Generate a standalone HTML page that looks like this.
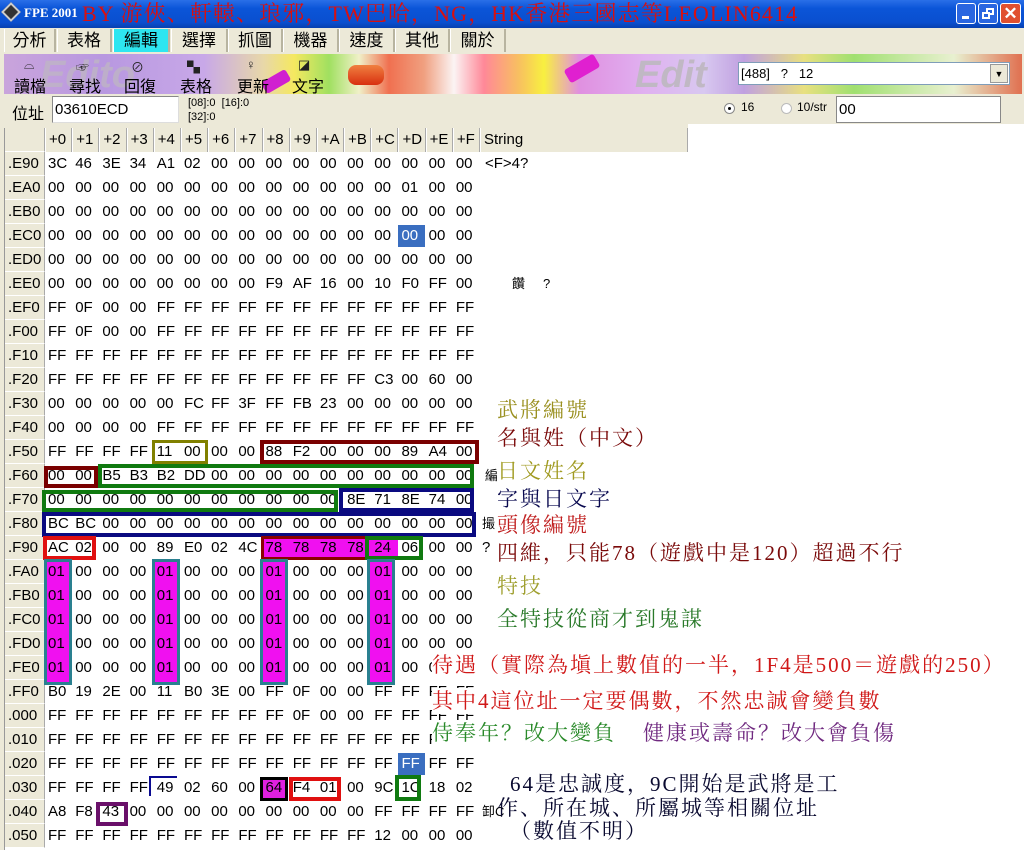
<!DOCTYPE html>
<html><head><meta charset="utf-8">
<style>
*{margin:0;padding:0;box-sizing:border-box}
body{width:1024px;height:850px;overflow:hidden;background:#ece9d8;font-family:"Liberation Sans","Noto Sans CJK TC",sans-serif;position:relative}
.abs{position:absolute}
#title{left:0;top:0;width:1024px;height:28px;background:linear-gradient(#2a6fe8,#0b55d8 30%,#0a4fcf 80%,#0840b0)}
.tab{position:absolute;top:29px;height:23px;font-size:17px;line-height:23px;text-align:center;border-right:2px solid #b8b4a0;border-left:1px solid #fff;color:#000}
#tb{left:4px;top:54px;width:1018px;height:40px;background:linear-gradient(90deg,#c9a4dc 0px,#b898e0 100px,#c8a8e8 200px,#e8d8a8 260px,#f5e860 290px,#a0e060 325px,#f0f0c8 355px,#f07050 385px,#f0a080 420px,#fbf4f4 450px,#ff8898 480px,#f8c060 515px,#f8f040 540px,#e090e0 575px,#e0b0f0 640px,#d8c8f0 700px,#c0a0e0 740px,#e8e080 800px,#a0e070 850px,#e8f0d0 950px,#e07050 1018px)}
.btn{position:absolute;top:73px;font-size:16px;color:#000}
.ico{position:absolute;top:57px;font-size:13px;color:#222}
#grid{left:5px;top:128px;width:683px;height:722px;background:#fff}
.row{position:absolute;left:5px;height:24px;display:flex;font-size:15px;line-height:24px;z-index:2}
.row b{font-weight:normal;width:40px;background:#ece9d8;border-right:1px solid #aaa;border-bottom:1px solid #fff;padding-left:3px}
.row i{font-style:normal;width:27.2px;padding-left:3px;white-space:nowrap}
.row s{text-decoration:none;padding-left:5px;white-space:nowrap}
.hd i{background:#ece9d8;border-right:1px solid #aaa;border-left:1px solid #fff}
.bx{position:absolute;z-index:3}
.fill{position:absolute;z-index:1}
.an{position:absolute;font-family:"Liberation Serif","Noto Serif CJK SC",serif;font-size:21px;line-height:26px;white-space:nowrap;z-index:4;letter-spacing:2px}
</style></head><body>
<div id="title" class="abs"></div>
<div class="abs" style="left:4px;top:5px;width:14px;height:14px;background:#333;transform:rotate(45deg);border:2px solid #ccc"></div>
<div class="abs" style="left:24px;top:5px;color:#fff;font-weight:bold;font-size:13px;font-family:'Liberation Serif',serif">FPE 2001</div>
<div class="abs" style="left:82px;top:0px;color:#d81010;font-size:22px;line-height:28px;letter-spacing:1.1px;font-family:'Liberation Serif','Noto Serif CJK SC',serif;white-space:nowrap">BY 游俠、軒轅、琅邪，TW巴哈，NG，HK香港三國志等LEOLIN6414</div>
<div class="abs" style="left:956px;top:3px;width:20px;height:21px;border:1px solid #fff;border-radius:3px;background:#2a66e0"><div class="abs" style="left:5px;top:12px;width:7px;height:3px;background:#fff"></div></div>
<div class="abs" style="left:978px;top:3px;width:20px;height:21px;border:1px solid #fff;border-radius:3px;background:#2a66e0"><div class="abs" style="left:7px;top:4px;width:8px;height:7px;border:2px solid #fff"></div><div class="abs" style="left:3px;top:8px;width:8px;height:7px;border:2px solid #fff;background:#2a66e0"></div></div>
<div class="abs" style="left:1000px;top:3px;width:21px;height:21px;border:1px solid #fff;border-radius:3px;background:#e05030;color:#fff;font-weight:bold;font-size:17px;text-align:center;line-height:19px">✕</div>

<div class="tab" style="left:4px;width:52px">分析</div>
<div class="tab" style="left:57px;width:55px">表格</div>
<div class="tab" style="left:113px;width:57px;background:#2ee6f0">編輯</div>
<div class="tab" style="left:171px;width:57px">選擇</div>
<div class="tab" style="left:228px;width:55px">抓圖</div>
<div class="tab" style="left:283px;width:56px">機器</div>
<div class="tab" style="left:339px;width:56px">速度</div>
<div class="tab" style="left:395px;width:55px">其他</div>
<div class="tab" style="left:450px;width:56px">關於</div>

<div id="tb" class="abs"></div>
<div class="abs" style="left:635px;top:56px;font-size:38px;font-style:italic;font-weight:bold;color:#c0b8c4;line-height:38px">Edit</div>
<div class="abs" style="left:40px;top:56px;font-size:38px;font-style:italic;font-weight:bold;color:rgba(190,180,196,.8);line-height:38px">Edito</div>
<div class="abs" style="left:348px;top:65px;width:36px;height:20px;border-radius:8px;background:linear-gradient(#f08040,#d83010);"></div>
<div class="abs" style="left:565px;top:61px;width:34px;height:15px;background:#e020d0;transform:rotate(-30deg);border-radius:3px"></div>
<div class="abs" style="left:262px;top:75px;width:28px;height:13px;background:#d020d0;transform:rotate(-30deg);border-radius:3px"></div>
<div class="ico" style="left:24px">⌓</div><div class="btn" style="left:14px">讀檔</div>
<div class="ico" style="left:76px">☞</div><div class="btn" style="left:69px">尋找</div>
<div class="ico" style="left:131px">⊘</div><div class="btn" style="left:124px">回復</div>
<div class="ico" style="left:187px">▚</div><div class="btn" style="left:180px">表格</div>
<div class="ico" style="left:246px">♀</div><div class="btn" style="left:237px">更新</div>
<div class="ico" style="left:298px">◪</div><div class="btn" style="left:292px">文字</div>
<div class="abs" style="left:738px;top:62px;width:272px;height:23px;background:#fff;border:1px solid #7f9db9;font-size:13px;line-height:21px;padding-left:2px;white-space:pre">[488]   ?   12</div>
<div class="abs" style="left:990px;top:64px;width:18px;height:19px;background:#ece9d8;border:1px solid #999;font-size:9px;text-align:center;line-height:19px">▼</div>

<div class="abs" style="left:12px;top:100px;font-size:16px">位址</div>
<div class="abs" style="left:52px;top:96px;width:127px;height:27px;background:#fff;border:1px solid #888;border-right-color:#ddd;border-bottom-color:#ddd;font-size:15px;line-height:25px;padding-left:2px">03610ECD</div>
<div class="abs" style="left:188px;top:96px;font-size:11px;line-height:14px">[08]:0 &nbsp;[16]:0<br>[32]:0</div>
<div class="abs" style="left:724px;top:103px;width:11px;height:11px;border-radius:50%;background:#fff;border:1px solid #888"><div class="abs" style="left:3px;top:3px;width:3px;height:3px;background:#000;border-radius:50%"></div></div>
<div class="abs" style="left:741px;top:100px;font-size:12px">16</div>
<div class="abs" style="left:781px;top:103px;width:11px;height:11px;border-radius:50%;background:#fff;border:1px solid #bbb"></div>
<div class="abs" style="left:797px;top:100px;font-size:12px">10/str</div>
<div class="abs" style="left:836px;top:96px;width:165px;height:27px;background:#fff;border:1px solid #888;font-size:15px;line-height:25px;padding-left:2px">00</div>
<div class="abs" style="left:688px;top:124px;width:336px;height:726px;background:#fff"></div>
<div class="abs" style="left:945px;top:124px;width:79px;height:4px;background:#fff"></div>

<div id="grid" class="abs"></div>
<div class="abs" style="left:0;top:128px;width:5px;height:722px;background:#ece9d8;border-right:1px solid #999"></div>

<div class="fill" style="left:398px;top:225px;width:27px;height:22px;background:#3a6ec0"></div>
<div class="fill" style="left:398px;top:753px;width:27px;height:22px;background:#3a6ec0"></div>
<div class="fill" style="left:261px;top:536px;width:108px;height:24px;background:#f010f0"></div>
<div class="fill" style="left:368px;top:538px;width:30px;height:21px;background:#f010f0"></div>
<div class="fill" style="left:44px;top:559px;width:28px;height:126px;background:#f010f0"></div>
<div class="fill" style="left:152px;top:559px;width:28px;height:126px;background:#f010f0"></div>
<div class="fill" style="left:260px;top:559px;width:28px;height:126px;background:#f010f0"></div>
<div class="fill" style="left:367px;top:559px;width:28px;height:126px;background:#f010f0"></div>
<div class="fill" style="left:260px;top:777px;width:28px;height:24px;background:#e020e0"></div>

<div class="row hd" style="top:128px"><b></b><i>+0</i><i>+1</i><i>+2</i><i>+3</i><i>+4</i><i>+5</i><i>+6</i><i>+7</i><i>+8</i><i>+9</i><i>+A</i><i>+B</i><i>+C</i><i>+D</i><i>+E</i><i>+F</i><i style="width:208px">String</i></div>
<div class="row" style="top:152px"><b>.E90</b><i>3C</i><i>46</i><i>3E</i><i>34</i><i>A1</i><i>02</i><i>00</i><i>00</i><i>00</i><i>00</i><i>00</i><i>00</i><i>00</i><i>00</i><i>00</i><i>00</i><s>&lt;F&gt;4?</s></div>
<div class="row" style="top:176px"><b>.EA0</b><i>00</i><i>00</i><i>00</i><i>00</i><i>00</i><i>00</i><i>00</i><i>00</i><i>00</i><i>00</i><i>00</i><i>00</i><i>00</i><i>01</i><i>00</i><i>00</i></div>
<div class="row" style="top:200px"><b>.EB0</b><i>00</i><i>00</i><i>00</i><i>00</i><i>00</i><i>00</i><i>00</i><i>00</i><i>00</i><i>00</i><i>00</i><i>00</i><i>00</i><i>00</i><i>00</i><i>00</i></div>
<div class="row" style="top:224px"><b>.EC0</b><i>00</i><i>00</i><i>00</i><i>00</i><i>00</i><i>00</i><i>00</i><i>00</i><i>00</i><i>00</i><i>00</i><i>00</i><i>00</i><i style="color:#fff">00</i><i>00</i><i>00</i></div>
<div class="row" style="top:248px"><b>.ED0</b><i>00</i><i>00</i><i>00</i><i>00</i><i>00</i><i>00</i><i>00</i><i>00</i><i>00</i><i>00</i><i>00</i><i>00</i><i>00</i><i>00</i><i>00</i><i>00</i></div>
<div class="row" style="top:272px"><b>.EE0</b><i>00</i><i>00</i><i>00</i><i>00</i><i>00</i><i>00</i><i>00</i><i>00</i><i>F9</i><i>AF</i><i>16</i><i>00</i><i>10</i><i>F0</i><i>FF</i><i>00</i><s style="padding-left:32px;font-size:13px">饡 &nbsp; &nbsp; ?</s></div>
<div class="row" style="top:296px"><b>.EF0</b><i>FF</i><i>0F</i><i>00</i><i>00</i><i>FF</i><i>FF</i><i>FF</i><i>FF</i><i>FF</i><i>FF</i><i>FF</i><i>FF</i><i>FF</i><i>FF</i><i>FF</i><i>FF</i></div>
<div class="row" style="top:320px"><b>.F00</b><i>FF</i><i>0F</i><i>00</i><i>00</i><i>FF</i><i>FF</i><i>FF</i><i>FF</i><i>FF</i><i>FF</i><i>FF</i><i>FF</i><i>FF</i><i>FF</i><i>FF</i><i>FF</i></div>
<div class="row" style="top:344px"><b>.F10</b><i>FF</i><i>FF</i><i>FF</i><i>FF</i><i>FF</i><i>FF</i><i>FF</i><i>FF</i><i>FF</i><i>FF</i><i>FF</i><i>FF</i><i>FF</i><i>FF</i><i>FF</i><i>FF</i></div>
<div class="row" style="top:368px"><b>.F20</b><i>FF</i><i>FF</i><i>FF</i><i>FF</i><i>FF</i><i>FF</i><i>FF</i><i>FF</i><i>FF</i><i>FF</i><i>FF</i><i>FF</i><i>C3</i><i>00</i><i>60</i><i>00</i></div>
<div class="row" style="top:392px"><b>.F30</b><i>00</i><i>00</i><i>00</i><i>00</i><i>00</i><i>FC</i><i>FF</i><i>3F</i><i>FF</i><i>FB</i><i>23</i><i>00</i><i>00</i><i>00</i><i>00</i><i>00</i></div>
<div class="row" style="top:416px"><b>.F40</b><i>00</i><i>00</i><i>00</i><i>00</i><i>FF</i><i>FF</i><i>FF</i><i>FF</i><i>FF</i><i>FF</i><i>FF</i><i>FF</i><i>FF</i><i>FF</i><i>FF</i><i>FF</i></div>
<div class="row" style="top:440px"><b>.F50</b><i>FF</i><i>FF</i><i>FF</i><i>FF</i><i>11</i><i>00</i><i>00</i><i>00</i><i>88</i><i>F2</i><i>00</i><i>00</i><i>00</i><i>89</i><i>A4</i><i>00</i></div>
<div class="row" style="top:464px"><b>.F60</b><i>00</i><i>00</i><i>B5</i><i>B3</i><i>B2</i><i>DD</i><i>00</i><i>00</i><i>00</i><i>00</i><i>00</i><i>00</i><i>00</i><i>00</i><i>00</i><i>00</i><s style="font-size:13px">編</s></div>
<div class="row" style="top:488px"><b>.F70</b><i>00</i><i>00</i><i>00</i><i>00</i><i>00</i><i>00</i><i>00</i><i>00</i><i>00</i><i>00</i><i>00</i><i>8E</i><i>71</i><i>8E</i><i>74</i><i>00</i></div>
<div class="row" style="top:512px"><b>.F80</b><i>BC</i><i>BC</i><i>00</i><i>00</i><i>00</i><i>00</i><i>00</i><i>00</i><i>00</i><i>00</i><i>00</i><i>00</i><i>00</i><i>00</i><i>00</i><i>00</i><s style="font-size:13px;padding-left:2px">撮</s></div>
<div class="row" style="top:536px"><b>.F90</b><i>AC</i><i>02</i><i>00</i><i>00</i><i>89</i><i>E0</i><i>02</i><i>4C</i><i>78</i><i>78</i><i>78</i><i>78</i><i>24</i><i>06</i><i>00</i><i>00</i><s style="padding-left:2px">?</s></div>
<div class="row" style="top:560px"><b>.FA0</b><i>01</i><i>00</i><i>00</i><i>00</i><i>01</i><i>00</i><i>00</i><i>00</i><i>01</i><i>00</i><i>00</i><i>00</i><i>01</i><i>00</i><i>00</i><i>00</i></div>
<div class="row" style="top:584px"><b>.FB0</b><i>01</i><i>00</i><i>00</i><i>00</i><i>01</i><i>00</i><i>00</i><i>00</i><i>01</i><i>00</i><i>00</i><i>00</i><i>01</i><i>00</i><i>00</i><i>00</i></div>
<div class="row" style="top:608px"><b>.FC0</b><i>01</i><i>00</i><i>00</i><i>00</i><i>01</i><i>00</i><i>00</i><i>00</i><i>01</i><i>00</i><i>00</i><i>00</i><i>01</i><i>00</i><i>00</i><i>00</i></div>
<div class="row" style="top:632px"><b>.FD0</b><i>01</i><i>00</i><i>00</i><i>00</i><i>01</i><i>00</i><i>00</i><i>00</i><i>01</i><i>00</i><i>00</i><i>00</i><i>01</i><i>00</i><i>00</i><i>00</i></div>
<div class="row" style="top:656px"><b>.FE0</b><i>01</i><i>00</i><i>00</i><i>00</i><i>01</i><i>00</i><i>00</i><i>00</i><i>01</i><i>00</i><i>00</i><i>00</i><i>01</i><i>00</i><i>00</i><i>00</i></div>
<div class="row" style="top:680px"><b>.FF0</b><i>B0</i><i>19</i><i>2E</i><i>00</i><i>11</i><i>B0</i><i>3E</i><i>00</i><i>FF</i><i>0F</i><i>00</i><i>00</i><i>FF</i><i>FF</i><i>FF</i><i>FF</i></div>
<div class="row" style="top:704px"><b>.000</b><i>FF</i><i>FF</i><i>FF</i><i>FF</i><i>FF</i><i>FF</i><i>FF</i><i>FF</i><i>FF</i><i>0F</i><i>00</i><i>00</i><i>FF</i><i>FF</i><i>FF</i><i>FF</i></div>
<div class="row" style="top:728px"><b>.010</b><i>FF</i><i>FF</i><i>FF</i><i>FF</i><i>FF</i><i>FF</i><i>FF</i><i>FF</i><i>FF</i><i>FF</i><i>FF</i><i>FF</i><i>FF</i><i>FF</i><i>FF</i><i>FF</i></div>
<div class="row" style="top:752px"><b>.020</b><i>FF</i><i>FF</i><i>FF</i><i>FF</i><i>FF</i><i>FF</i><i>FF</i><i>FF</i><i>FF</i><i>FF</i><i>FF</i><i>FF</i><i>FF</i><i style="color:#fff">FF</i><i>FF</i><i>FF</i></div>
<div class="row" style="top:776px"><b>.030</b><i>FF</i><i>FF</i><i>FF</i><i>FF</i><i>49</i><i>02</i><i>60</i><i>00</i><i>64</i><i>F4</i><i>01</i><i>00</i><i>9C</i><i>1C</i><i>18</i><i>02</i></div>
<div class="row" style="top:800px"><b>.040</b><i>A8</i><i>F8</i><i>43</i><i>00</i><i>00</i><i>00</i><i>00</i><i>00</i><i>00</i><i>00</i><i>00</i><i>00</i><i>FF</i><i>FF</i><i>FF</i><i>FF</i><s style="font-size:13px;padding-left:2px">卸C</s></div>
<div class="row" style="top:824px"><b>.050</b><i>FF</i><i>FF</i><i>FF</i><i>FF</i><i>FF</i><i>FF</i><i>FF</i><i>FF</i><i>FF</i><i>FF</i><i>FF</i><i>FF</i><i>12</i><i>00</i><i>00</i><i>00</i></div>

<div class="bx" style="left:152px;top:440px;width:56px;height:24px;border:3px solid #808000"></div>
<div class="bx" style="left:260px;top:440px;width:219px;height:24px;border:4px solid #7a0000"></div>
<div class="bx" style="left:44px;top:466px;width:54px;height:22px;border:4px solid #7a0000"></div>
<div class="bx" style="left:98px;top:464px;width:376px;height:24px;border:4px solid #107a10"></div>
<div class="bx" style="left:42px;top:490px;width:296px;height:22px;border:4px solid #107a10"></div>
<div class="bx" style="left:339px;top:488px;width:135px;height:24px;border:4px solid #0a0a80"></div>
<div class="bx" style="left:42px;top:512px;width:434px;height:25px;border:4px solid #0a0a80"></div>
<div class="bx" style="left:43px;top:536px;width:53px;height:24px;border:4px solid #e01010"></div>
<div class="bx" style="left:261px;top:536px;width:108px;height:24px;border:3px solid #8b0000"></div>
<div class="bx" style="left:365px;top:536px;width:58px;height:24px;border:4px solid #107a10"></div>
<div class="bx" style="left:44px;top:559px;width:28px;height:126px;border:3px solid #2a8090"></div>
<div class="bx" style="left:152px;top:559px;width:28px;height:126px;border:3px solid #2a8090"></div>
<div class="bx" style="left:260px;top:559px;width:28px;height:126px;border:3px solid #2a8090"></div>
<div class="bx" style="left:367px;top:559px;width:28px;height:126px;border:3px solid #2a8090"></div>
<div class="bx" style="left:149px;top:776px;width:28px;height:20px;border-top:2px solid #0a0a90;border-left:2px solid #0a0a90"></div>
<div class="bx" style="left:260px;top:777px;width:28px;height:24px;border:3px solid #000"></div>
<div class="bx" style="left:289px;top:777px;width:52px;height:24px;border:4px solid #e01010"></div>
<div class="bx" style="left:395px;top:775px;width:26px;height:26px;border:4px solid #107a10"></div>
<div class="bx" style="left:96px;top:802px;width:32px;height:24px;border:4px solid #6a106a"></div>

<div class="an" style="left:497px;top:397px;color:#9a9020">武將編號</div>
<div class="an" style="left:497px;top:425px;color:#7a0a0a">名與姓（中文）</div>
<div class="an" style="left:497px;top:458px;color:#a09a20">日文姓名</div>
<div class="an" style="left:497px;top:486px;color:#0a0a50">字與日文字</div>
<div class="an" style="left:497px;top:512px;color:#c02020">頭像編號</div>
<div class="an" style="left:497px;top:540px;color:#7a0a0a">四維，只能78（遊戲中是120）超過不行</div>
<div class="an" style="left:497px;top:573px;color:#a0a030">特技</div>
<div class="an" style="left:497px;top:606px;color:#2a7a2a">全特技從商才到鬼謀</div>
<div class="an" style="left:432px;top:652px;color:#d01818;background:#fff;padding-right:8px">待遇（實際為塡上數值的一半，1F4是500＝遊戲的250）</div>
<div class="an" style="left:432px;top:688px;color:#d01818;background:#fff">其中4這位址一定要偶數，不然忠誠會變負數</div>
<div class="an" style="left:432px;top:720px;color:#2a8a2a;background:#fff">侍奉年？改大變負</div>
<div class="an" style="left:643px;top:720px;color:#702a80">健康或壽命？改大會負傷</div>
<div class="an" style="left:510px;top:771px;color:#0a0a30">64是忠誠度，9C開始是武將是工</div>
<div class="an" style="left:497px;top:795px;color:#0a0a30">作、所在城、所屬城等相關位址</div>
<div class="an" style="left:510px;top:818px;color:#0a0a30">（數值不明）</div>
</body></html>
